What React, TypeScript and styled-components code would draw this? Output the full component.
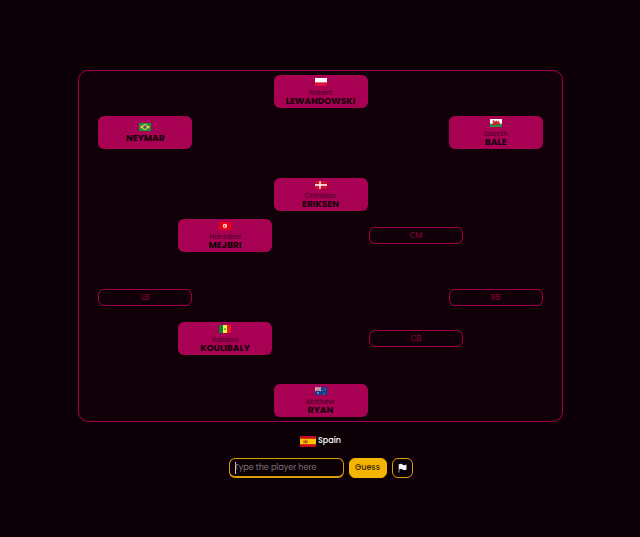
import React from "react";
import styled, { createGlobalStyle } from "styled-components";

const GlobalStyle = createGlobalStyle`
  * { box-sizing: border-box; }
  html, body { margin: 0; background: #0c0006; }
  body { font-family: Poppins, Inter, "Liberation Sans", sans-serif; }
`;

const Page = styled.main`
  min-height: 100vh;
  padding: 70px 77px 58px 78px;
  display: flex;
  flex-direction: column;
  background: #0c0006;
`;

const Pitch = styled.section`
  display: flex;
  flex-direction: column;
  gap: 29px;
  padding: 4px 0;
  border: 1px solid #a40050;
  border-radius: 10px;
  background: #120008;
`;

const Line = styled.div`
  display: flex;
  flex-direction: column;
  gap: 8px;
`;

const Row = styled.div<{ $spread: number }>`
  align-self: center;
  width: ${(p) => p.$spread}%;
  height: 33px;
  display: flex;
  align-items: center;
  justify-content: ${(p) => (p.$spread ? "space-between" : "center")};
`;

const Card = styled.article`
  width: 94px;
  height: 33px;
  flex-shrink: 0;
  display: flex;
  flex-direction: column;
  align-items: center;
  justify-content: center;
  border-radius: 6px;
  background: #a80052;
  color: #12000a;
`;

const FirstName = styled.span`
  font-size: 7px;
  line-height: 8px;
  color: #3c0020;
`;

const LastName = styled.strong`
  font-size: 9px;
  line-height: 9px;
  font-weight: 700;
  text-transform: uppercase;
`;

const Slot = styled.div`
  width: 94px;
  height: 17px;
  flex-shrink: 0;
  display: flex;
  align-items: center;
  justify-content: center;
  border: 1px solid #a40050;
  border-radius: 6px;
  font-size: 8px;
  color: #8c0045;
`;

const FlagSvg = styled.svg<{ $large?: boolean }>`
  display: block;
  flex-shrink: 0;
  width: ${(p) => (p.$large ? 16 : 12)}px;
  height: ${(p) => (p.$large ? 11 : 8)}px;
  margin-bottom: ${(p) => (p.$large ? 0 : 3)}px;
`;

const Nation = styled.h1`
  margin: 12px 0 0;
  display: flex;
  align-items: center;
  justify-content: center;
  gap: 2px;
  font-size: 8px;
  line-height: 14px;
  font-weight: 500;
  color: #ffffff;
`;

const GuessForm = styled.form`
  margin-top: 10px;
  display: flex;
  justify-content: center;
  gap: 5px;
`;

const PlayerInput = styled.input`
  width: 115px;
  height: 20px;
  padding: 0 5px;
  border: 1px solid #d89e06;
  border-bottom-width: 2px;
  border-radius: 6px;
  outline: none;
  background: #0c0006;
  color: #ffffff;
  font: inherit;
  font-size: 8px;
  caret-color: transparent;
  &::placeholder { color: #7c7177; opacity: 1; }
  &:placeholder-shown {
    background: linear-gradient(#c9c2c6, #c9c2c6) 5px center / 1px 12px no-repeat #0c0006;
  }
  &:not(:placeholder-shown) { caret-color: #ffffff; }
`;

const Button = styled.button<{ $solid?: boolean }>`
  width: ${(p) => (p.$solid ? 38 : 21)}px;
  height: 20px;
  padding: 0;
  display: flex;
  align-items: center;
  justify-content: center;
  border: 1px solid ${(p) => (p.$solid ? "#f5b400" : "#d89e06")};
  border-radius: 6px;
  background: ${(p) => (p.$solid ? "#f5b400" : "#0c0006")};
  color: #402a08;
  font: inherit;
  font-size: 8px;
  font-weight: 500;
`;

type Country = "pl" | "br" | "wales" | "dk" | "tn" | "sn" | "au" | "es";

const flagArt: Record<Country, React.ReactNode> = {
  pl: (
    <>
      <path fill="#fff" d="M0 0h36v24H0z" />
      <path fill="#dc143c" d="M0 13h36v11H0z" />
    </>
  ),
  br: (
    <>
      <path fill="#129447" d="M0 0h36v24H0z" />
      <path fill="#f8d31b" d="M18 2.5 33 12 18 21.500 3 12z" />
      <circle cx="18" cy="12" r="5.500" fill="#21358b" />
      <path d="M13 10.500q6-.5 10 4" stroke="#fff" fill="none" />
    </>
  ),
  wales: (
    <>
      <path fill="#fff" d="M0 0h36v24H0z" />
      <path fill="#17973f" d="M0 14h36v10H0z" />
      <path
        fill="#cf1f36"
        d="m6 6 5-2 3 2 1 4 3-7 4 5 5-4-1 6 5-2-3 5 2 2-4 1 2 4h-4l-2-4-5 1-2 4h-4l2-5-6 3 1-3-3-1 5-3-1-3z"
      />
    </>
  ),
  dk: (
    <>
      <path fill="#c8102e" d="M0 0h36v24H0z" />
      <path fill="#fff" d="M13 0h4v24h-4zM0 10h36v4H0z" />
    </>
  ),
  tn: (
    <>
      <path fill="#e70013" d="M0 0h36v24H0z" />
      <circle cx="18" cy="12" r="6.500" fill="#fff" />
      <circle cx="18.500" cy="12" r="4.500" fill="#e70013" />
      <circle cx="20" cy="12" r="3.500" fill="#fff" />
      <path fill="#e70013" d="m16.500 12 5-2.500-2 2.500 2 2.500z" />
    </>
  ),
  sn: (
    <>
      <path fill="#00853f" d="M0 0h12v24H0z" />
      <path fill="#fdef42" d="M12 0h12v24H12z" />
      <path fill="#e31b23" d="M24 0h12v24H24z" />
      <path fill="#00853f" d="m18 8 1 3h3l-2.500 2 1 3-2.500-2-2.500 2 1-3-2.500-2h3z" />
    </>
  ),
  au: (
    <>
      <path fill="#123f8c" d="M0 0h36v24H0z" />
      <path d="m0 0 18 12M18 0 0 12" stroke="#fff" strokeWidth="3" />
      <path d="m0 0 18 12M18 0 0 12" stroke="#d5203b" />
      <path d="M9 0v12M0 6h18" stroke="#fff" strokeWidth="4" />
      <path d="M9 0v12M0 6h18" stroke="#d5203b" strokeWidth="2" />
      <g fill="#fff">
        <circle cx="9" cy="18" r="2" />
        <circle cx="27" cy="4" r="1.200" />
        <circle cx="23" cy="10" r="1.200" />
        <circle cx="31" cy="9" r="1.200" />
        <circle cx="27" cy="20" r="1.400" />
      </g>
    </>
  ),
  es: (
    <>
      <path fill="#c60b1e" d="M0 0h36v24H0z" />
      <path fill="#ffc400" d="M0 6h36v12H0z" />
      <path fill="#ad3b20" d="M8 9h2v7H8zM15 9h2v7h-2zM11 8h3v2h-3zM11 11h3v4l-1.500 1.500L11 15z" />
    </>
  ),
};

function Flag({ country, large }: { country: Country; large?: boolean }) {
  return (
    <FlagSvg $large={large} viewBox="0 0 36 24" preserveAspectRatio="none" aria-hidden="true">
      {flagArt[country]}
    </FlagSvg>
  );
}

type Place = { slot: string } | { country: Country; first?: string; last: string };

const formation: { spread: number; places: Place[] }[][] = [
  [
    { spread: 0, places: [{ country: "pl", first: "Robert", last: "Lewandowski" }] },
    {
      spread: 92,
      places: [
        { country: "br", last: "Neymar" },
        { country: "wales", first: "Gareth", last: "Bale" },
      ],
    },
  ],
  [
    { spread: 0, places: [{ country: "dk", first: "Christian", last: "Eriksen" }] },
    { spread: 59, places: [{ country: "tn", first: "Hannibal", last: "Mejbri" }, { slot: "CM" }] },
  ],
  [
    { spread: 92, places: [{ slot: "LB" }, { slot: "RB" }] },
    { spread: 59, places: [{ country: "sn", first: "Kalidou", last: "Koulibaly" }, { slot: "CB" }] },
  ],
  [{ spread: 0, places: [{ country: "au", first: "Mathew", last: "Ryan" }] }],
];

function Position({ place }: { place: Place }) {
  if ("slot" in place) return <Slot>{place.slot}</Slot>;
  return (
    <Card>
      <Flag country={place.country} />
      {place.first && <FirstName>{place.first}</FirstName>}
      <LastName>{place.last}</LastName>
    </Card>
  );
}

export default function App() {
  return (
    <>
      <GlobalStyle />
      <Page>
        <Pitch aria-label="Line-up">
          {formation.map((line, i) => (
            <Line key={i}>
              {line.map((row, j) => (
                <Row key={j} $spread={row.spread}>
                  {row.places.map((place, k) => (
                    <Position key={k} place={place} />
                  ))}
                </Row>
              ))}
            </Line>
          ))}
        </Pitch>
        <Nation>
          <Flag country="es" large />
          Spain
        </Nation>
        <GuessForm onSubmit={(e) => e.preventDefault()}>
          <PlayerInput aria-label="Player name" placeholder="Type the player here" autoFocus />
          <Button type="submit" $solid>
            Guess
          </Button>
          <Button type="button" aria-label="Give up">
            <svg width="9" height="10" viewBox="0 0 18 20" aria-hidden="true">
              <path d="M2 2v17" stroke="#8d9299" strokeWidth="2" />
              <path d="M2 3q4-3 7 0t8 0v10q-4 3-8 0t-7 0z" fill="#eef4fa" />
            </svg>
          </Button>
        </GuessForm>
      </Page>
    </>
  );
}
